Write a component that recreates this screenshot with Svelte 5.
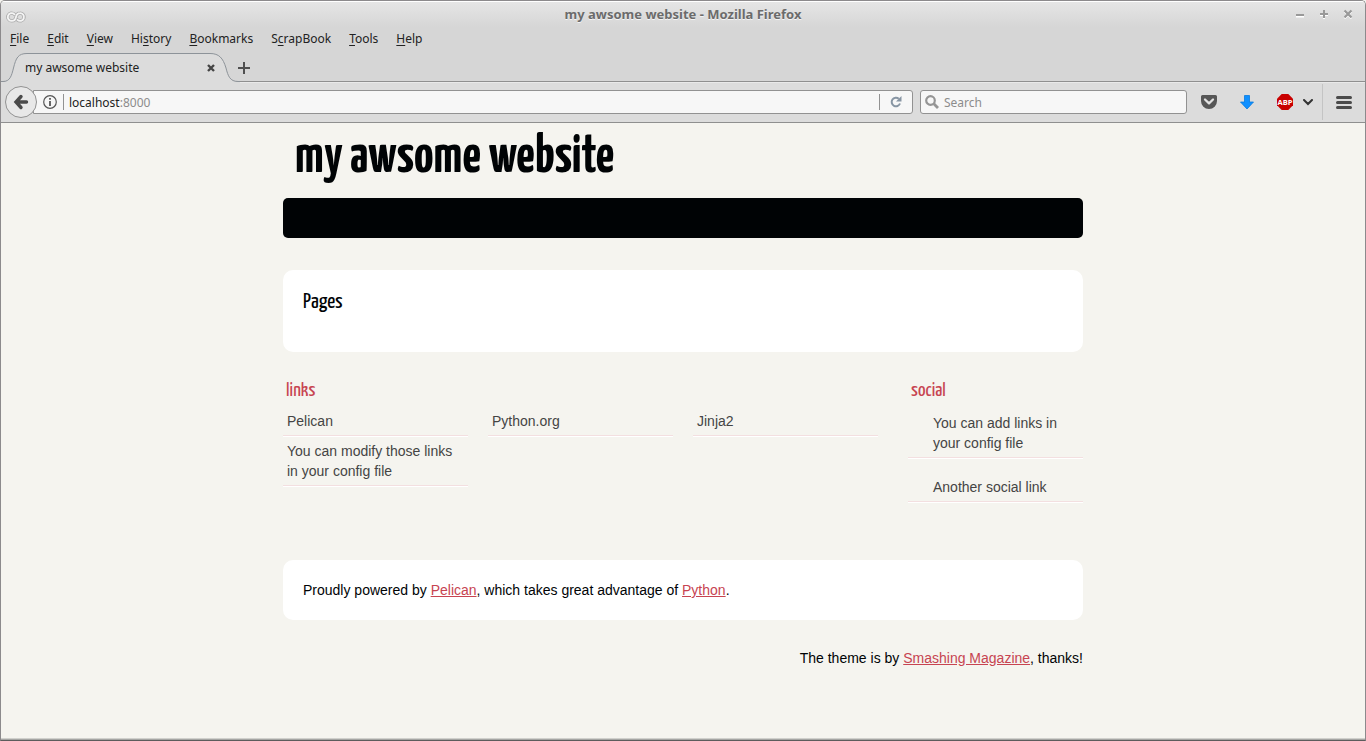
<script>
  const menus = [
    ['', 'F', 'ile'], ['', 'E', 'dit'], ['', 'V', 'iew'], ['Hi', 's', 'tory'],
    ['', 'B', 'ookmarks'], ['S', 'c', 'rapBook'], ['', 'T', 'ools'], ['', 'H', 'elp']
  ];
  const links = ['Pelican', 'Python.org', 'Jinja2', 'You can modify those links in your config file'];
  const social = ['You can add links in your config file', 'Another social link'];
  let address = $state('localhost:8000');
  const host = $derived(address.split(':')[0]);
  const port = $derived(address.slice(host.length));
  let query = $state('');
</script>

<div class="window">
  <header class="chrome">
    <div class="titlebar">
      <svg class="app" width="20" height="14" viewBox="0 0 20 14" aria-hidden="true">
        <g fill="none" stroke-linecap="round">
          <path d="M8.500 4.300A3.900 3.900 0 1 0 6 10.900C8.600 10.900 9.600 9 10 7C10.400 5 11.600 3.100 14 3.100A3.900 3.900 0 1 1 11.500 9.900" stroke="#adadad" stroke-width="3.400" />
          <path d="M8.500 4.300A3.900 3.900 0 1 0 6 10.900C8.600 10.900 9.600 9 10 7C10.400 5 11.600 3.100 14 3.100A3.900 3.900 0 1 1 11.500 9.900" stroke="#f4f4f4" stroke-width="1.800" />
        </g>
      </svg>
      <span class="caption">my awsome website - Mozilla Firefox</span>
      <div class="controls">
        <button aria-label="Minimize"><svg width="10" height="10" viewBox="0 0 10 10"><path d="M1 7.500H9" stroke="#fff" stroke-width="2" /><path d="M1 6H9" stroke="#999" stroke-width="2" /></svg></button>
        <button aria-label="Maximize"><svg width="10" height="10" viewBox="0 0 10 10"><path d="M1 6H9M5 2V10" stroke="#fff" stroke-width="2" /><path d="M1 5H9M5 1V9" stroke="#999" stroke-width="2" /></svg></button>
        <button aria-label="Close"><svg width="10" height="10" viewBox="0 0 10 10"><path d="M1.500 2.500L8.500 9.500M8.500 2.500L1.500 9.500" stroke="#fff" stroke-width="2" /><path d="M1.500 1.500L8.500 8.500M8.500 1.500L1.500 8.500" stroke="#999" stroke-width="2.200" /></svg></button>
      </div>
    </div>

    <nav class="menubar" aria-label="Menu">
      {#each menus as [before, key, after]}
        <button>{before}<u>{key}</u>{after}</button>
      {/each}
    </nav>

    <div class="tabs">
      <div class="tab">
        <svg class="shape" width="239" height="30" viewBox="0 0 239 30" aria-hidden="true">
          <path d="M0 28.500H2C9 28.500 10.500 23 12.500 15C15 5 17 .5 26 .5H209C218 .5 222 5 225 15C227 23 229 28.500 237 28.500H239V30H0Z" fill="#dcdcdc" />
          <path d="M0 28.500H2C9 28.500 10.500 23 12.500 15C15 5 17 .5 26 .5H209C218 .5 222 5 225 15C227 23 229 28.500 237 28.500H239" fill="none" stroke="#8d9399" />
        </svg>
        <span class="name">my awsome website</span>
        <button class="close" aria-label="Close tab"><svg width="8" height="8" viewBox="0 0 8 8"><path d="M1 1L7 7M7 1L1 7" stroke="#454545" stroke-width="2.400" /></svg></button>
      </div>
      <button class="new" aria-label="New tab"><svg width="12" height="12" viewBox="0 0 12 12"><path d="M0 6H12M6 0V12" stroke="#505050" stroke-width="2" /></svg></button>
    </div>

    <div class="toolbar">
      <button class="back" aria-label="Back"><svg width="16" height="16" viewBox="0 0 16 16"><path d="M8 2.500L3 8L8 13.500M3.500 8H13.500" fill="none" stroke="#4b4b4b" stroke-width="3.400" stroke-linejoin="miter" stroke-linecap="round" /></svg></button>
      <div class="address">
        <svg width="14" height="14" viewBox="0 0 14 14" aria-hidden="true"><circle cx="7" cy="7" r="6.300" fill="none" stroke="#555" stroke-width="1.200" /><path d="M7 6V11M7 3V4.800" stroke="#555" stroke-width="1.800" /></svg>
        <i class="rule"></i>
        <div class="entry">
          <input aria-label="Address" bind:value={address} />
          <div class="shown" aria-hidden="true">{host}<span>{port}</span></div>
        </div>
        <i class="rule"></i>
        <button class="reload" aria-label="Reload"><svg width="12" height="12" viewBox="0 0 12 12"><path d="M10 7.500A4.300 4.300 0 1 1 8.800 2.700" fill="none" stroke="#8795a3" stroke-width="2" /><path d="M11.500 0V5.500H6Z" fill="#8795a3" /></svg></button>
      </div>
      <label class="search">
        <svg width="15" height="15" viewBox="0 0 15 15" aria-hidden="true"><circle cx="5.500" cy="5.500" r="4.300" fill="none" stroke="#959595" stroke-width="2.200" /><path d="M8.800 8.800L13 13" stroke="#959595" stroke-width="2.800" /></svg>
        <input aria-label="Search" placeholder="Search" bind:value={query} />
      </label>
      <div class="tools">
        <button aria-label="Save to Pocket"><svg width="16" height="14" viewBox="0 0 16 14"><path d="M1.500 0H14.500A1.500 1.500 0 0 1 16 1.500V6A8 8 0 0 1 0 6V1.500A1.500 1.500 0 0 1 1.500 0Z" fill="#575757" /><path d="M4 4.500L8 8.300L12 4.500" fill="none" stroke="#e2e2e2" stroke-width="2.300" stroke-linecap="round" stroke-linejoin="round" /></svg></button>
        <button aria-label="Downloads"><svg width="14" height="15" viewBox="0 0 14 15"><path d="M4.500 .5H9.500V7H13.500L7 14L.5 7H4.500Z" fill="#1090ff" stroke="#087be0" stroke-width=".8" /></svg></button>
        <button aria-label="Adblock Plus"><svg width="16" height="16" viewBox="0 0 16 16"><path d="M4.700 0H11.300L16 4.700V11.300L11.300 16H4.700L0 11.300V4.700Z" fill="#c90000" /><text x="8" y="10.700" text-anchor="middle" font-family="Open Sans, sans-serif" font-size="7.500" font-weight="700" fill="#fff">ABP</text></svg></button>
        <button class="more" aria-label="Adblock Plus options"><svg width="10" height="7" viewBox="0 0 10 7"><path d="M1 1L5 5L9 1" fill="none" stroke="#333" stroke-width="2" stroke-linecap="round" /></svg></button>
        <button class="menu" aria-label="Open menu"><svg width="16" height="13" viewBox="0 0 16 13"><path d="M1.500 1.500H14.500M1.500 6.500H14.500M1.500 11.500H14.500" stroke="#4b4b4b" stroke-width="3" stroke-linecap="round" /></svg></button>
      </div>
    </div>
  </header>

  <div class="page">
    <h1>my awsome website</h1>
    <div class="band"></div>
    <main class="card pages"><h2>Pages</h2></main>
    <div class="extras">
      <section class="blogroll">
        <h3>links</h3>
        <ul>{#each links as item}<li><a href="#top">{item}</a></li>{/each}</ul>
      </section>
      <section class="social">
        <h3>social</h3>
        <ul>{#each social as item}<li><a href="#top">{item}</a></li>{/each}</ul>
      </section>
    </div>
    <footer>
      <p class="card">Proudly powered by <a href="#top">Pelican</a>, which takes great advantage of <a href="#top">Python</a>.</p>
      <p class="theme">The theme is by <a href="#top">Smashing Magazine</a>, thanks!</p>
    </footer>
  </div>
</div>

<style>
  :global(body) { margin: 0; background: #f5f4ef; }
  * { box-sizing: border-box; }
  button { border: 0; padding: 0; background: none; color: inherit; font: inherit; display: flex; align-items: center; justify-content: center; }
  svg { display: block; flex: none; }
  input { border: 0; outline: 0; padding: 0; background: none; font: inherit; min-width: 0; }
  h1, h2, h3, p, ul { margin: 0; padding: 0; }
  ul { list-style: none; }

  .window { min-height: 100vh; border: 1px solid #8c8a8c; border-bottom: 1px solid #5c5c5c; border-radius: 5px 5px 0 0; box-shadow: inset 0 -1px #a5a5a3, inset 0 -2px #d0d0cc; background: #f5f4ef; overflow: hidden; }
  .chrome { font: 12px/16px "Noto Sans", sans-serif; color: #222; background: linear-gradient(#e6e6e6, #d6d6d6 26px); box-shadow: inset 0 1px #fff; }
  .titlebar { display: grid; grid-template-columns: 1fr auto 1fr; align-items: center; height: 26px; padding: 0 5px; }
  .app { margin-top: 6px; }
  .caption { font-size: 13px; font-weight: 700; color: #6b6b6b; text-shadow: 0 1px #f4f4f4; }
  .controls { display: flex; justify-content: flex-end; gap: 14px; padding-right: 7px; }

  .menubar { display: flex; gap: 18px; padding: 4px 9px 0; height: 26px; }
  .menubar button { height: 16px; display: block; white-space: nowrap; }
  .menubar u { text-underline-offset: 2px; text-decoration-thickness: 1px; text-decoration-skip-ink: none; }

  .tabs { display: flex; height: 29px; box-shadow: inset 0 -1px #8f8f8f; }
  .tab { position: relative; display: flex; align-items: center; justify-content: space-between; width: 237px; padding: 0 23px 0 24px; }
  .shape { position: absolute; left: 0; top: 0; }
  .name, .close { position: relative; }
  .new { padding-right: 4px; }

  .toolbar { display: flex; align-items: center; height: 41px; padding: 0 13px 0 4px; background: #dcdcdc; border-bottom: 1px solid #8f8f8f; box-shadow: inset 0 1px #e9e9e9; }
  .back { position: relative; z-index: 1; width: 32px; height: 32px; border: 1px solid #929292; border-radius: 50%; background: #e8e8e8; flex: none; }
  .address { display: flex; align-items: center; flex: 1; height: 24px; margin-left: -4px; padding: 0 10px 0 9px; border: 1px solid #929292; border-radius: 0 3px 3px 0; background: #f7f7f7; }
  .rule { width: 1px; height: 16px; background: #929292; margin-left: 6px; }
  .entry { display: grid; flex: 1; margin-left: 5px; padding-top: 2px; }
  .entry > * { grid-area: 1 / 1; }
  .entry input { color: transparent; caret-color: #222; }
  .shown { pointer-events: none; }
  .shown span { color: #8c8c8c; }
  .reload { margin-left: 10px; }
  .search { display: flex; align-items: center; gap: 4px; width: 267px; height: 24px; margin-left: 7px; padding: 0 4px; border: 1px solid #929292; border-radius: 3px; background: #f7f7f7; }
  .search input { flex: 1; padding-top: 2px; }
  .search input::placeholder { color: #8c8c8c; opacity: 1; }
  .tools { display: flex; align-items: center; margin-left: 14px; gap: 23px; }
  .tools .more { margin-left: -13px; }
  .menu { height: 36px; padding-left: 13px; margin-left: -14px; border-left: 1px solid #c4c4c4; }

  .page { max-width: 800px; margin: 0 auto; padding-bottom: 72px; font: 14px/20px "Liberation Sans", sans-serif; color: #000305; }
  h1, h2, h3 { font-family: "Yanone Kaffeesatz", "Liberation Sans Narrow", "Liberation Sans", sans-serif; }
  h1 { padding: 5px 12px 10px; font-size: 54px; line-height: 60px; }
  .band { height: 40px; border-radius: 5px; background: #000305; }
  .card { border-radius: 10px; background: #fff; padding: 20px; }
  .pages { margin-top: 32px; min-height: 82px; }
  h2 { font-size: 22px; line-height: 24px; font-weight: 400; }
  .extras { display: flex; justify-content: space-between; padding-top: 28px; min-height: 208px; }
  h3 { padding: 0 3px; font-size: 20px; line-height: 22px; font-weight: 400; color: #c74451; }
  .blogroll ul { display: grid; grid-template-columns: repeat(3, 185px); column-gap: 20px; padding-top: 4px; }
  li { padding: 5px 4px 4px; border-bottom: 1px solid #f3dfe0; box-shadow: 0 1px #fff; }
  li a { color: #444; text-decoration: none; }
  .social { width: 175px; }
  .social ul { display: grid; gap: 14px; padding-top: 6px; }
  .social li { padding-left: 25px; }
  footer a { color: #c74451; }
  .theme { margin-top: 28px; text-align: right; }
</style>
